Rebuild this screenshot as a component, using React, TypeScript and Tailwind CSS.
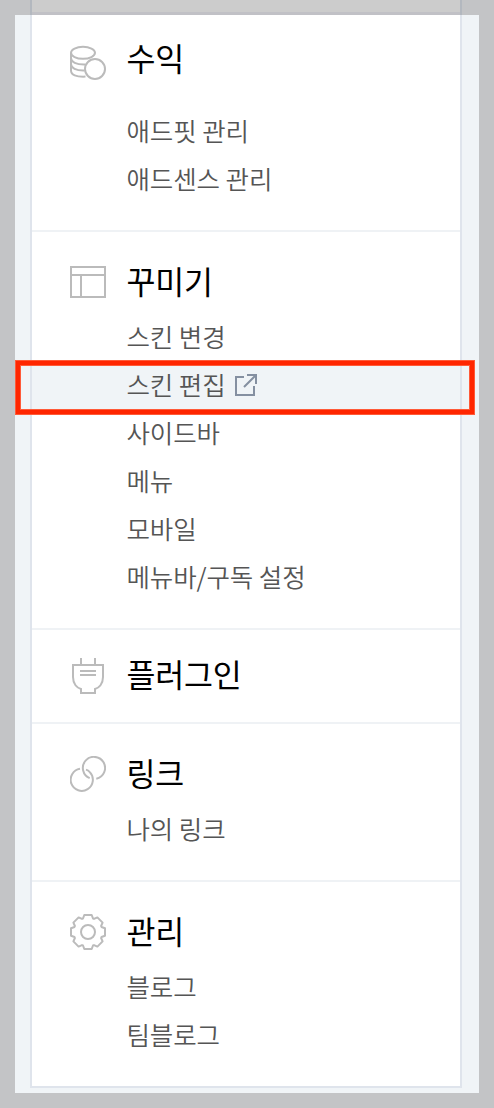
import type { ReactNode } from 'react'

type MenuItem = {
  label: string
  external?: boolean
}

function IconBase({ children }: { children: ReactNode }) {
  return (
    <svg
      viewBox="0 0 36 36"
      className="w-9 h-9 shrink-0 text-[#bbbbbb]"
      fill="none"
      stroke="currentColor"
      strokeWidth="2"
    >
      {children}
    </svg>
  )
}

function CoinsIcon() {
  return (
    <IconBase>
      <ellipse cx="13" cy="8.8" rx="12" ry="6" />
      <path d="M1 9V14C1 18 6 20.7 15.5 20.4M1 13.5V20C1 24 6 26.8 14.5 26.5M1 19.5V26.5C1 31 6 33 15.5 32.6" />
      <circle cx="25" cy="25" r="10" />
    </IconBase>
  )
}

function LayoutIcon() {
  return (
    <IconBase>
      <path d="M1 3H35V33H1ZM1 11H35M11 11V33" />
    </IconBase>
  )
}

function PlugIcon() {
  return (
    <IconBase>
      <path d="M11 0V7M25 0V7M3 7H33V19C33 26 29 30 25 31V35H11V31C7 30 3 26 3 19ZM10 13H26M10 17H26" />
    </IconBase>
  )
}

function LinkIcon() {
  return (
    <IconBase>
      <path d="M10 12.8A11.1 11.1 0 1 0 19.8 16.1Q18.2 14.3 16 13.6" />
      <path d="M19.7 22.2A11.1 11.1 0 1 1 26.3 22.8" />
    </IconBase>
  )
}

function GearIcon() {
  return (
    <IconBase>
      <path
        strokeLinejoin="round"
        d="M13 4.5L14.3 1H21.7L23 4.5L24 4.9L27.4 3.4L32.6 8.6L31.1 12L31.5 13L35 14.3V21.7L31.5 23L31.1 24L32.6 27.4L27.4 32.6L24 31.1L23 31.5L21.7 35H14.3L13 31.5L12 31.1L8.6 32.6L3.4 27.4L4.9 24L4.5 23L1 21.7V14.3L4.5 13L4.9 12L3.4 8.6L8.6 3.4L12 4.9Z"
      />
      <circle cx="18" cy="18" r="7" />
    </IconBase>
  )
}

function ExternalIcon() {
  return (
    <svg viewBox="0 0 22 22" className="w-[22px] h-[22px] ml-[9px]" fill="none" stroke="#8590a1" strokeWidth="2">
      <path d="M9 3H1V21H19V12M12 1H21V10M21 1L9 13" />
    </svg>
  )
}

function Section({
  title,
  icon,
  items = [],
  className = '',
  titleClassName = 'pb-[5px]',
  listClassName = 'mt-[7px]',
}: {
  title: string
  icon: ReactNode
  items?: MenuItem[]
  className?: string
  titleClassName?: string
  listClassName?: string
}) {
  return (
    <section className={className}>
      <h2 className="flex items-center h-12 pl-[38px] text-[31.5px] leading-[48px] tracking-[-0.2px] text-black">
        {icon}
        <span className={`ml-[20.5px] ${titleClassName}`}>{title}</span>
      </h2>
      {items.length > 0 && (
        <ul className={listClassName}>
          {items.map((item) => (
            <li
              key={item.label}
              className={`relative flex items-center h-12 pl-[94.5px] text-[25.5px] leading-[48px] font-[350] tracking-[-0.1px] text-[#555555] ${
                item.external ? 'bg-[#f0f4f7]' : ''
              }`}
            >
              <span className="pb-[2px]">{item.label}</span>
              {item.external && <ExternalIcon />}
              {item.external && (
                <div className="absolute -left-[17px] -top-[1px] w-[460px] h-[55px] border border-[#ff5a38]">
                  <div className="h-full border-4 border-[#ff2600]">
                    <div className="h-full border border-[#ff5a38]" />
                  </div>
                </div>
              )}
            </li>
          ))}
        </ul>
      )}
    </section>
  )
}

export default function App() {
  return (
    <div className="w-[494px] h-[1108px] bg-[#c3c4c6] font-['Noto_Sans_CJK_KR',sans-serif]">
      {/* Dimmed strip above the menu */}
      <div className="h-[15px] pl-[30px]">
        <div className="w-[432px] h-[15px] border-x-2 border-[#b3b8bf] bg-[#cccccc] flex flex-col justify-end">
          <div className="h-[3px] bg-[#c1c1c6]" />
        </div>
      </div>

      <div className="mx-[15px] h-[1078px] bg-[#f0f4f7] pl-[15px]">
        <nav className="w-[432px] h-[1073px] bg-white border-2 border-t-0 border-[#dfe4ec]">
          <Section
            title="수익"
            icon={<CoinsIcon />}
            items={[{ label: '애드핏 관리' }, { label: '애드센스 관리' }]}
            className="h-[217px] pt-[23px] border-b-2 border-[#eff2f5]"
            titleClassName="pb-[11px]"
            listClassName="mt-[21px]"
          />
          <Section
            title="꾸미기"
            icon={<LayoutIcon />}
            items={[
              { label: '스킨 변경' },
              { label: '스킨 편집', external: true },
              { label: '사이드바' },
              { label: '메뉴' },
              { label: '모바일' },
              { label: '메뉴바/구독 설정' },
            ]}
            className="h-[398px] pt-[26px] border-b-2 border-[#eff2f5]"
          />
          <Section
            title="플러그인"
            icon={<PlugIcon />}
            className="h-[94px] pt-[22px] border-b-2 border-[#eff2f5]"
            titleClassName="pb-[7px]"
          />
          <Section
            title="링크"
            icon={<LinkIcon />}
            items={[{ label: '나의 링크' }]}
            className="h-[158px] pt-[26px] border-b-2 border-[#eff2f5]"
          />
          <Section
            title="관리"
            icon={<GearIcon />}
            items={[{ label: '블로그' }, { label: '팀블로그' }]}
            className="pt-[26px]"
          />
        </nav>
      </div>
    </div>
  )
}
